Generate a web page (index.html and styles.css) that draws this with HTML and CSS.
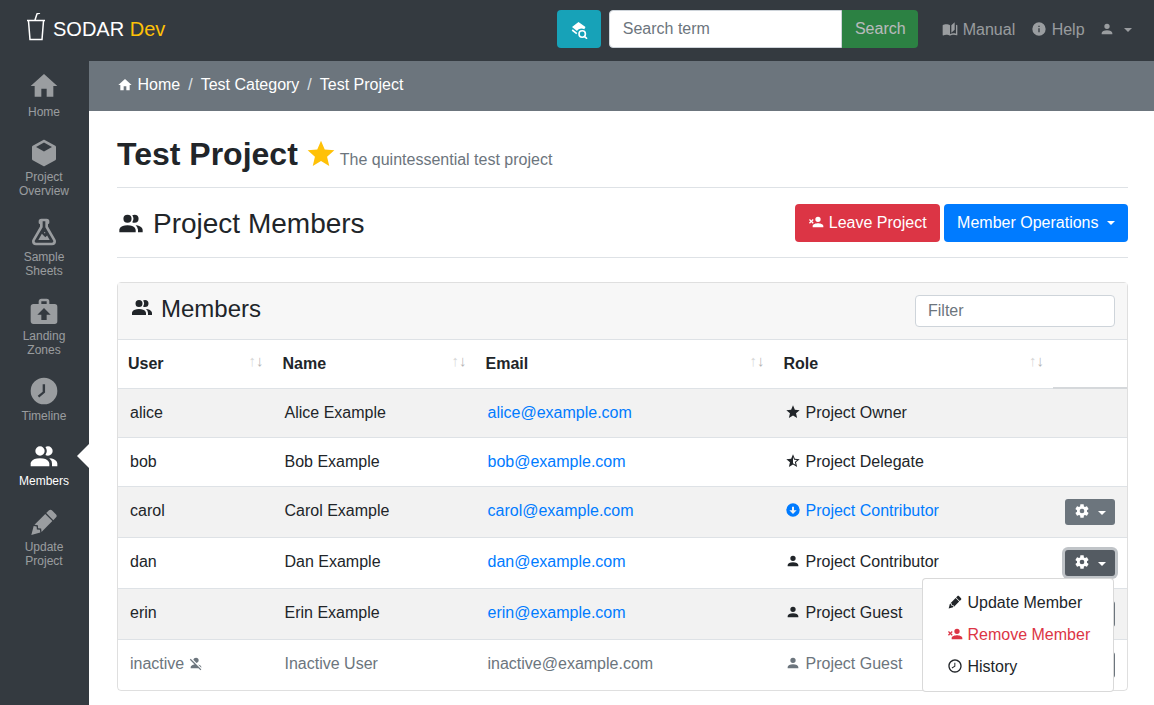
FILE: index.html
```html
<!DOCTYPE html>
<html lang="en">
<head>
  <meta charset="UTF-8" />
  <title>Project Members</title>
  <link rel="stylesheet" href="styles.css">
</head>
<body>

  <!-- Top bar -->
  <header class="topbar">
    <a class="brand">
      <svg class="logo" viewBox="0 0 22 30"><path d="M2 7.5H20M3.5 8L5 26.5H17L18.5 8M10 7L12 .8L15 0" fill="none" stroke="#fff" stroke-width="1.5"/></svg>
      <span>SODAR <span class="brand-dev">Dev</span></span>
    </a>
    <div class="search">
      <button class="btn-help">
        <svg class="ic-search" viewBox="0 0 20 20"><path d="M9.5 3L3 8L8 12C8.8 10.6 10.5 9.5 12.5 9.5C13.6 9.5 14.6 9.8 15.3 10.3L16.5 8Z" fill="#fff"/><path d="M3.2 11L7.8 14.6M10 15A3.2 3.2 0 1 0 16.4 15A3.2 3.2 0 1 0 10 15ZM15.6 17.4L18 19.8" fill="none" stroke="#fff" stroke-width="1.6"/></svg>
      </button>
      <div class="search-group">
        <input type="text" placeholder="Search term" />
        <button class="btn-search">Search</button>
      </div>
    </div>
    <nav class="topnav">
      <a><svg class="ic" viewBox="0 0 24 24"><path d="M19 2L14 6.5V17.5L19 13V2M6.5 5C4.55 5 2.45 5.4 1 6.5V21.16C1 21.41 1.25 21.66 1.5 21.66C1.6 21.66 1.65 21.59 1.75 21.59C3.1 20.94 5.05 20.5 6.5 20.5C8.45 20.5 10.55 20.9 12 22C13.35 21.15 15.8 20.5 17.5 20.5C19.15 20.5 20.85 20.81 22.25 21.56C22.35 21.61 22.4 21.59 22.5 21.59C22.75 21.59 23 21.34 23 21.09V6.5C22.4 6.05 21.75 5.75 21 5.5V19C19.9 18.65 18.7 18.5 17.5 18.5C15.8 18.5 13.35 19.15 12 20V6.5C10.55 5.4 8.45 5 6.5 5Z"/></svg> Manual</a>
      <a><svg class="ic" viewBox="0 0 24 24"><path d="M13,9H11V7H13M13,17H11V11H13M12,2A10,10 0 0,0 2,12A10,10 0 0,0 12,22A10,10 0 0,0 22,12A10,10 0 0,0 12,2Z"/></svg> Help</a>
      <a class="user"><svg class="ic" viewBox="0 0 24 24"><use href="#acct"/></svg><span class="caret"></span></a>
    </nav>
  </header>

  <div class="layout">

    <!-- Sidebar -->
    <aside class="sidebar">
      <a class="side-item side-home"><svg viewBox="0 0 24 24"><path d="M10,20V14H14V20H19V12H22L12,3L2,12H5V20H10Z"/></svg>Home</a>
      <a class="side-item two"><svg viewBox="0 0 24 24"><path d="M21,16.5C21,16.88 20.79,17.21 20.47,17.38L12.57,21.82C12.41,21.94 12.21,22 12,22C11.79,22 11.59,21.94 11.43,21.82L3.53,17.38C3.21,17.21 3,16.88 3,16.5V7.5C3,7.12 3.21,6.79 3.53,6.62L11.43,2.18C11.59,2.06 11.79,2 12,2C12.21,2 12.41,2.06 12.57,2.18L20.47,6.62C20.79,6.79 21,7.12 21,7.5V16.5M12,4.15L6.04,7.5L12,10.85L17.96,7.5L12,4.15Z"/></svg>Project<br>Overview</a>
      <a class="side-item two"><svg viewBox="0 0 24 24"><path d="M5,19A1,1 0 0,0 6,20H18A1,1 0 0,0 19,19C19,18.79 18.93,18.59 18.82,18.43L13,8.35V4H11V8.35L5.18,18.43C5.07,18.59 5,18.79 5,19M6,22A3,3 0 0,1 3,19C3,18.4 3.18,17.84 3.5,17.37L9,7.81V6A1,1 0 0,1 8,5V4A2,2 0 0,1 10,2H14A2,2 0 0,1 16,4V5A1,1 0 0,1 15,6V7.81L20.5,17.37C20.82,17.84 21,18.4 21,19A3,3 0 0,1 18,22H6M13,16L14.34,14.66L16.27,18H7.73L10.39,13.39L13,16M12.5,12A0.5,0.5 0 0,1 13,12.5A0.5,0.5 0 0,1 12.5,13A0.5,0.5 0 0,1 12,12.5A0.5,0.5 0 0,1 12.5,12Z"/></svg>Sample<br>Sheets</a>
      <a class="side-item two"><svg viewBox="0 0 24 24"><path d="M10,2H14A2,2 0 0,1 16,4V6H20A2,2 0 0,1 22,8V19A2,2 0 0,1 20,21H4C2.89,21 2,20.1 2,19V8C2,6.89 2.89,6 4,6H8V4C8,2.89 8.89,2 10,2M14,6V4H10V6H14M12,9L7,14H10V18H14V14H17L12,9Z"/></svg>Landing<br>Zones</a>
      <a class="side-item"><svg viewBox="0 0 24 24"><path d="M12 2A10 10 0 1 0 22 12A10 10 0 0 0 12 2M12.8 13.2L8.4 16.9L7.3 15.6L11 12.5V7H12.8Z"/></svg>Timeline</a>
      <a class="side-item active"><svg viewBox="0 0 24 24"><path d="M16 17V19H2V17S2 13 9 13 16 17 16 17M12.5 7.5A3.5 3.5 0 1 0 9 11A3.5 3.5 0 0 0 12.5 7.5M15.94 13A5.32 5.32 0 0 1 18 17V19H22V17S22 13.37 15.94 13M15 4A3.39 3.39 0 0 0 13.07 4.59A5 5 0 0 1 13.07 10.41A3.39 3.39 0 0 0 15 11A3.5 3.5 0 0 0 15 4Z"/></svg>Members</a>
      <a class="side-item two"><svg viewBox="0 0 24 24"><use href="#lead-pencil"/></svg>Update<br>Project</a>
    </aside>

    <div class="page">

      <!-- Breadcrumb -->
      <div class="crumbs">
        <svg class="ic" viewBox="0 0 24 24"><path d="M10,20V14H14V20H19V12H22L12,3L2,12H5V20H10Z"/></svg>
        <a>Home</a><span class="sep">/</span><a>Test Category</a><span class="sep">/</span><span>Test Project</span>
      </div>

      <main class="content">
        <div class="title-row">
          <h2>Test Project</h2>
          <svg class="star" viewBox="0 0 24 24"><path d="M12,17.27L18.18,21L16.54,13.97L22,9.24L14.81,8.62L12,2L9.19,8.62L2,9.24L7.45,13.97L5.82,21L12,17.27Z"/></svg>
          <small>The quintessential test project</small>
        </div>

        <div class="section-row">
          <h3><svg viewBox="0 0 24 24"><path d="M16 17V19H2V17S2 13 9 13 16 17 16 17M12.5 7.5A3.5 3.5 0 1 0 9 11A3.5 3.5 0 0 0 12.5 7.5M15.94 13A5.32 5.32 0 0 1 18 17V19H22V17S22 13.37 15.94 13M15 4A3.39 3.39 0 0 0 13.07 4.59A5 5 0 0 1 13.07 10.41A3.39 3.39 0 0 0 15 11A3.5 3.5 0 0 0 15 4Z"/></svg>Project Members</h3>
          <div class="section-ops">
            <button class="btn btn-danger"><svg class="ic" viewBox="0 0 24 24"><path d="M15,14C17.67,14 23,15.33 23,18V20H7V18C7,15.33 12.33,14 15,14M15,12A4,4 0 0,1 11,8A4,4 0 0,1 15,4A4,4 0 0,1 19,8A4,4 0 0,1 15,12M5,9.59L7.12,7.46L8.54,8.88L6.41,11L8.54,13.12L7.12,14.54L5,12.41L2.88,14.54L1.46,13.12L3.59,11L1.46,8.88L2.88,7.46L5,9.59Z"/></svg> Leave Project</button>
            <button class="btn btn-primary">Member Operations<span class="caret"></span></button>
          </div>
        </div>

        <div class="card">
          <div class="card-head">
            <h4><svg viewBox="0 0 24 24"><path d="M16 17V19H2V17S2 13 9 13 16 17 16 17M12.5 7.5A3.5 3.5 0 1 0 9 11A3.5 3.5 0 0 0 12.5 7.5M15.94 13A5.32 5.32 0 0 1 18 17V19H22V17S22 13.37 15.94 13M15 4A3.39 3.39 0 0 0 13.07 4.59A5 5 0 0 1 13.07 10.41A3.39 3.39 0 0 0 15 11A3.5 3.5 0 0 0 15 4Z"/></svg>Members</h4>
            <input class="filter" type="text" placeholder="Filter" />
          </div>

          <table class="members">
            <colgroup>
              <col class="col-user"><col class="col-name"><col class="col-email"><col class="col-role"><col class="col-ops">
            </colgroup>
            <thead>
              <tr>
                <th><div class="th-in">User<span class="sort"><i>↑</i>↓</span></div></th>
                <th><div class="th-in">Name<span class="sort"><i>↑</i>↓</span></div></th>
                <th><div class="th-in">Email<span class="sort"><i>↑</i>↓</span></div></th>
                <th><div class="th-in">Role<span class="sort"><i>↑</i>↓</span></div></th>
                <th class="th-ops"></th>
              </tr>
            </thead>
            <tbody>
              <tr>
                <td>alice</td><td>Alice Example</td><td><a>alice@example.com</a></td>
                <td><svg class="ic role" viewBox="0 0 24 24"><path d="M12,17.27L18.18,21L16.54,13.97L22,9.24L14.81,8.62L12,2L9.19,8.62L2,9.24L7.45,13.97L5.82,21L12,17.27Z"/></svg>Project Owner</td><td></td>
              </tr>
              <tr>
                <td>bob</td><td>Bob Example</td><td><a>bob@example.com</a></td>
                <td><svg class="ic role" viewBox="0 0 24 24"><path d="M12,15.4V6.1L13.71,10.13L18.09,10.5L14.77,13.39L15.76,17.67M22,9.24L14.81,8.62L12,2L9.19,8.62L2,9.24L7.45,13.97L5.82,21L12,17.27L18.18,21L16.54,13.97L22,9.24Z"/></svg>Project Delegate</td><td></td>
              </tr>
              <tr>
                <td>carol</td><td>Carol Example</td><td><a>carol@example.com</a></td>
                <td><a><svg class="ic role" viewBox="0 0 24 24"><path d="M12,2A10,10 0 0,0 2,12A10,10 0 0,0 12,22A10,10 0 0,0 22,12A10,10 0 0,0 12,2M12,18L6.5,12.5H10.5V7H13.5V12.5H17.5L12,18Z"/></svg>Project Contributor</a></td>
                <td class="ops"><button class="btn-ops"><svg class="ic" viewBox="0 0 24 24"><use href="#cog"/></svg><span class="caret"></span></button></td>
              </tr>
              <tr>
                <td>dan</td><td>Dan Example</td><td><a>dan@example.com</a></td>
                <td><svg class="ic role" viewBox="0 0 24 24"><use href="#acct"/></svg>Project Contributor</td>
                <td class="ops">
                  <button class="btn-ops focused"><svg class="ic" viewBox="0 0 24 24"><use href="#cog"/></svg><span class="caret"></span></button>
                  <!-- Open menu -->
                  <div class="menu">
                    <a><svg class="ic" viewBox="0 0 24 24"><use href="#lead-pencil"/></svg>Update Member</a>
                    <a class="menu-danger"><svg class="ic" viewBox="0 0 24 24"><path d="M15,14C17.67,14 23,15.33 23,18V20H7V18C7,15.33 12.33,14 15,14M15,12A4,4 0 0,1 11,8A4,4 0 0,1 15,4A4,4 0 0,1 19,8A4,4 0 0,1 15,12M5,9.59L7.12,7.46L8.54,8.88L6.41,11L8.54,13.12L7.12,14.54L5,12.41L2.88,14.54L1.46,13.12L3.59,11L1.46,8.88L2.88,7.46L5,9.59Z"/></svg>Remove Member</a>
                    <a><svg class="ic" viewBox="0 0 24 24"><path d="M12 20C16.4 20 20 16.4 20 12S16.4 4 12 4 4 7.6 4 12 7.6 20 12 20M12 2C17.5 2 22 6.5 22 12S17.5 22 12 22C6.5 22 2 17.5 2 12C2 6.5 6.5 2 12 2M12.5 12.8L7.7 15.6L7 14.2L11 11.9V7H12.5V12.8Z"/></svg>History</a>
                  </div>
                </td>
              </tr>
              <tr>
                <td>erin</td><td>Erin Example</td><td><a>erin@example.com</a></td>
                <td><svg class="ic role" viewBox="0 0 24 24"><use href="#acct"/></svg>Project Guest</td>
                <td class="ops"><button class="btn-ops"><svg class="ic" viewBox="0 0 24 24"><use href="#cog"/></svg><span class="caret"></span></button></td>
              </tr>
              <tr class="inactive">
                <td>inactive <svg class="ic off" viewBox="0 0 24 24"><path d="M12,4A4,4 0 0,1 16,8C16,9.95 14.6,11.58 12.75,11.93L8.07,7.25C8.42,5.4 10.05,4 12,4M12.28,14L18.28,20L20,21.72L18.73,23L15.73,20H4V18C4,16.16 6.5,14.61 9.87,14.14L2.78,7.05L4.05,5.78L12.28,14M20,18V19.18L15.14,14.32C18,14.93 20,16.35 20,18Z"/></svg></td>
                <td>Inactive User</td><td>inactive@example.com</td>
                <td><svg class="ic role" viewBox="0 0 24 24"><use href="#acct"/></svg>Project Guest</td>
                <td class="ops"><button class="btn-ops"><svg class="ic" viewBox="0 0 24 24"><use href="#cog"/></svg><span class="caret"></span></button></td>
              </tr>
            </tbody>
          </table>
        </div>
      </main>
    </div>
  </div>

  <!-- Shared icons -->
  <svg class="defs" width="0" height="0">
    <defs>
      <path id="acct" d="M12,4A4,4 0 0,1 16,8A4,4 0 0,1 12,12A4,4 0 0,1 8,8A4,4 0 0,1 12,4M12,14C16.42,14 20,15.79 20,18V20H4V18C4,15.79 7.58,14 12,14Z"/>
      <path id="lead-pencil" d="M16.84,2.73C16.45,2.73 16.07,2.88 15.77,3.17L13.65,5.29L18.95,10.6L21.07,8.5C21.67,7.89 21.67,6.94 21.07,6.36L17.9,3.17C17.6,2.88 17.22,2.73 16.84,2.73M12.94,6L4.84,14.11L7.4,14.39L7.58,16.68L9.86,16.85L10.15,19.41L18.25,11.3M4.25,15.04L2.5,21.73L9.2,19.94L8.96,17.78L6.65,17.61L6.47,15.29"/>
      <path id="cog" d="M12,15.5A3.5,3.5 0 0,1 8.5,12A3.5,3.5 0 0,1 12,8.5A3.5,3.5 0 0,1 15.5,12A3.5,3.5 0 0,1 12,15.5M19.43,12.97C19.47,12.65 19.5,12.33 19.5,12C19.5,11.67 19.47,11.34 19.43,11L21.54,9.37C21.73,9.22 21.78,8.95 21.66,8.73L19.66,5.27C19.54,5.05 19.27,4.96 19.05,5.05L16.56,6.05C16.04,5.66 15.5,5.32 14.87,5.07L14.5,2.42C14.46,2.18 14.25,2 14,2H10C9.75,2 9.54,2.18 9.5,2.42L9.13,5.07C8.5,5.32 7.96,5.66 7.44,6.05L4.95,5.05C4.73,4.96 4.46,5.05 4.34,5.27L2.34,8.73C2.21,8.95 2.27,9.22 2.46,9.37L4.57,11C4.53,11.34 4.5,11.67 4.5,12C4.5,12.33 4.53,12.65 4.57,12.97L2.46,14.63C2.27,14.78 2.21,15.05 2.34,15.27L4.34,18.73C4.46,18.95 4.73,19.03 4.95,18.95L7.44,17.94C7.96,18.34 8.5,18.68 9.13,18.93L9.5,21.58C9.54,21.82 9.75,22 10,22H14C14.25,22 14.46,21.82 14.5,21.58L14.87,18.93C15.5,18.67 16.04,18.34 16.56,17.94L19.05,18.95C19.27,19.03 19.54,18.95 19.66,18.73L21.66,15.27C21.78,15.05 21.73,14.78 21.54,14.63L19.43,12.97Z"/>
    </defs>
  </svg>

</body>
</html>
```

FILE: styles.css
```css
* {
  box-sizing: border-box;
}
html, body {
  height: 100%;
}
body {
  margin: 0;
  overflow: hidden;
  font-family: "Liberation Sans", Arial, sans-serif;
  font-size: 16px;
  line-height: 24px;
  color: #212529;
  background-color: #fff;
}
a {
  text-decoration: none;
}
button, input {
  font-family: inherit;
  font-size: 16px;
  line-height: 24px;
}
.ic {
  width: 16px;
  height: 16px;
  fill: currentColor;
  vertical-align: -2px;
}
.caret {
  display: inline-block;
  width: 0;
  height: 0;
  margin-left: 8px;
  vertical-align: 3px;
  border-top: 4.8px solid;
  border-left: 4.8px solid transparent;
  border-right: 4.8px solid transparent;
}
.defs {
  position: absolute;
}

/* Top bar */
.topbar {
  height: 61px;
  display: flex;
  align-items: center;
  padding: 0 20px 3px 25px;
  white-space: nowrap;
  background-color: #343a40;
}
.brand {
  display: flex;
  align-items: center;
  gap: 6px;
  font-size: 20px;
  color: #fff;
}
.logo {
  width: 22px;
  height: 30px;
  margin-top: -3px;
}
.brand-dev {
  color: #ffc107;
}
.search {
  display: flex;
  gap: 8px;
  margin-left: 392px;
}
.btn-help {
  width: 44px;
  height: 38px;
  padding: 0;
  border: none;
  border-radius: 4px;
  background-color: #17a2b8;
}
.ic-search {
  display: block;
  width: 20px;
  height: 20px;
  margin: 0 auto;
}
.search-group {
  display: flex;
}
.search-group input {
  width: 233px;
  height: 38px;
  padding: 6px 12.5px;
  border: 1px solid #ced4da;
  border-radius: 4px 0 0 4px;
  color: #495057;
}
input::placeholder {
  color: #6c757d;
}
.btn-search {
  width: 76px;
  height: 38px;
  padding: 0;
  border: none;
  border-radius: 0 4px 4px 0;
  color: #fff;
  background-color: #28a745;
  opacity: .65;
}
.topnav {
  display: flex;
  align-items: center;
  margin-left: 24px;
  padding-top: 1px;
  gap: 16px;
  color: rgba(255, 255, 255, .5);
}
.user {
  margin-left: -2px;
}
.user .caret {
  margin-left: 9px;
}

.layout {
  display: flex;
  height: 644px;
}

/* Sidebar */
.sidebar {
  width: 89px;
  flex-shrink: 0;
  background-color: #343a40;
}
.side-item {
  display: block;
  height: 65.5px;
  padding: 10px 1px 0 0;
  text-align: center;
  font-size: 12px;
  line-height: 14px;
  color: rgba(255, 255, 255, .5);
  position: relative;
}
.side-home {
  padding-top: 9px;
}
.side-item.two {
  height: 79.5px;
}
.side-item svg {
  display: block;
  width: 32px;
  height: 32px;
  margin: 0 auto 1.5px;
  fill: currentColor;
}
.side-home svg {
  margin-bottom: 3px;
}
.side-item.active {
  color: #fff;
}
.side-item.active::after {
  content: "";
  position: absolute;
  right: 0;
  top: 13px;
  border-top: 12.5px solid transparent;
  border-bottom: 12.5px solid transparent;
  border-right: 12px solid #fff;
}

.page {
  flex: 1;
  min-width: 0;
}

/* Breadcrumb */
.crumbs {
  height: 50px;
  display: flex;
  align-items: center;
  padding: 0 0 2px 28px;
  color: #fff;
  background-color: #6c757d;
}
.crumbs .ic {
  margin-right: 4.5px;
}
.sep {
  padding: 0 8px;
  color: #dee2e6;
}

.content {
  padding: 0 26px 0 28px;
}

/* Headings */
.title-row {
  height: 77px;
  display: flex;
  align-items: baseline;
  padding-top: 24px;
  border-bottom: 1px solid #dee2e6;
}
h2 {
  margin: 0;
  font-size: 32px;
  line-height: 38px;
  font-weight: bold;
}
.star {
  width: 32px;
  height: 32px;
  margin: 3px 3px 0 7px;
  fill: #ffc107;
  align-self: flex-start;
}
small {
  font-size: 16px;
  color: #6c757d;
}
.section-row {
  height: 70px;
  display: flex;
  align-items: center;
  justify-content: space-between;
  border-bottom: 1px solid #dee2e6;
}
h3 {
  margin: 2px 0 0;
  font-size: 28px;
  line-height: 34px;
  font-weight: normal;
  display: flex;
  align-items: center;
}
h3 svg {
  width: 28px;
  height: 28px;
  margin-right: 8px;
  fill: currentColor;
}
.section-ops {
  display: flex;
  gap: 4px;
}
.btn {
  height: 38px;
  padding: 0 13px;
  border: none;
  border-radius: 4px;
  white-space: nowrap;
  color: #fff;
}
.btn-danger {
  background-color: #dc3545;
}
.btn-primary {
  padding-left: 13.5px;
  background-color: #007bff;
}
.btn-primary .caret {
  margin-left: 8.5px;
}

/* Card */
.card {
  margin-top: 24px;
  border: 1px solid rgba(0, 0, 0, .125);
  border-radius: 4px;
}
.card-head {
  height: 57px;
  display: flex;
  align-items: center;
  justify-content: space-between;
  padding: 0 12px;
  background-color: #f7f7f7;
  border-bottom: 1px solid #dee2e6;
}
h4 {
  margin: 0 0 6px;
  font-size: 24px;
  line-height: 29px;
  font-weight: normal;
  display: flex;
  align-items: center;
}
h4 svg {
  width: 24px;
  height: 24px;
  margin-right: 7px;
  fill: currentColor;
}
.filter {
  width: 200px;
  height: 32px;
  padding: 4px 12px;
  border: 1px solid #ced4da;
  border-radius: 4px;
}

/* Table */
.members {
  width: 100%;
  table-layout: fixed;
  border-collapse: collapse;
}
.col-user { width: 154.5px; }
.col-name { width: 203px; }
.col-email { width: 298px; }
.col-role { width: 279.5px; }
th {
  height: 48px;
  padding: 0 10px;
  text-align: left;
  border-bottom: 1px solid #dee2e6;
}
.th-in {
  display: flex;
  justify-content: space-between;
}
.sort {
  font-size: 15px;
  font-weight: normal;
  line-height: 18px;
  color: #b5b5b5;
  margin-right: -1px;
}
.sort i {
  font-style: normal;
  color: #d8d8d8;
}
.th-ops {
  border-bottom: 2px solid #d5d8db;
}
td {
  padding: 12px;
  vertical-align: top;
  border-bottom: 1px solid #dee2e6;
}
tbody tr:nth-child(odd) {
  background-color: #f2f2f2;
}
tbody tr:last-child td {
  border-bottom: none;
}
td a {
  color: #007bff;
}
.role {
  margin: 0 5px 0 -1px;
}
.inactive td {
  color: #6c757d;
}
.off {
  margin-left: -1px;
}
.ops {
  position: relative;
  text-align: right;
}
.btn-ops {
  width: 50px;
  height: 26px;
  padding: 0;
  display: block;
  border: none;
  border-radius: 3px;
  font-size: 14px;
  line-height: 26px;
  color: #fff;
  background-color: #6c757d;
}
.btn-ops .caret {
  vertical-align: 2px;
}
.btn-ops.focused {
  background-color: #545b62;
  box-shadow: 0 0 0 3px rgba(130, 138, 145, .5);
}

/* Dropdown over the table */
.menu {
  position: absolute;
  top: 40px;
  right: 13px;
  width: 192px;
  padding: 8px 0;
  text-align: left;
  white-space: nowrap;
  background-color: #fff;
  border: 1px solid rgba(0, 0, 0, .15);
  border-radius: 4px;
  z-index: 5;
}
.menu a {
  display: block;
  padding: 4px 24px;
  color: #212529;
}
.menu .ic {
  margin-right: 4.5px;
}
.menu a.menu-danger {
  color: #dc3545;
}
```
